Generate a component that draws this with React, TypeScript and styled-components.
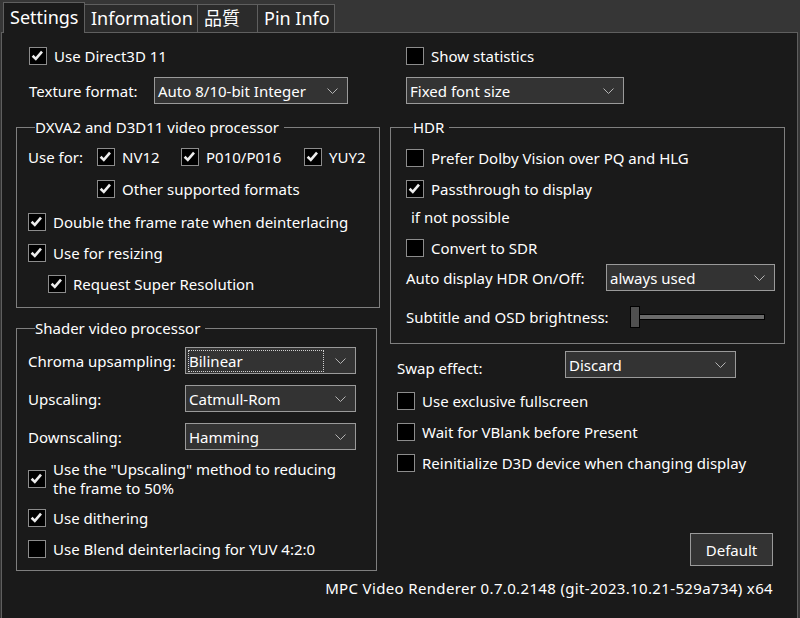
import React from 'react'
import styled, { createGlobalStyle } from 'styled-components'

const FONT = `'Noto Sans', 'Noto Sans CJK JP', sans-serif`

const GlobalStyle = createGlobalStyle`
  html, body {
    margin: 0;
    padding: 0;
    background: #1a1a1a;
  }
  body {
    font-family: ${FONT};
    color: #ffffff;
  }
`

const Window = styled.div`
  width: 800px;
  height: 618px;
  background: #363636;
  display: flex;
  flex-direction: column;
  overflow: hidden;
`

const TabBar = styled.div`
  height: 32px;
  display: flex;
  align-items: flex-end;
  padding-left: 3px;
  box-sizing: border-box;
`

const Tab = styled.div<{ $w: number; $active?: boolean }>`
  box-sizing: border-box;
  width: ${({ $w }) => $w}px;
  height: ${({ $active }) => ($active ? 31 : 28)}px;
  margin-right: -1px;
  margin-bottom: ${({ $active }) => ($active ? -1 : 0)}px;
  position: relative;
  z-index: ${({ $active }) => ($active ? 2 : 1)};
  padding-left: 6px;
  border: 1px solid #5f5f5f;
  border-bottom: none;
  background: ${({ $active }) => ($active ? '#1a1a1a' : '#2b2b2b')};
  font-size: 18px;
  line-height: ${({ $active }) => ($active ? 29 : 26)}px;
  white-space: nowrap;
`

const Panel = styled.div`
  flex: 1;
  margin-left: 1px;
  margin-right: 2px;
  border: 1px solid #5f5f5f;
  border-bottom: none;
  background: #1a1a1a;
  padding: 0 12px 0 14px;
  display: flex;
  flex-direction: column;
`

const Columns = styled.div`
  display: flex;
  gap: 10px;
`

const Column = styled.div<{ $w: number }>`
  width: ${({ $w }) => $w}px;
  display: flex;
  flex-direction: column;
  padding-top: 14px;
`

const Text = styled.span`
  font-size: 15px;
  line-height: 18px;
  white-space: nowrap;
  color: #ffffff;
`

const CheckRow = styled.label<{ $indent?: number; $top?: number }>`
  display: flex;
  align-items: center;
  gap: 7px;
  min-height: 18px;
  margin-left: ${({ $indent }) => $indent ?? 0}px;
  margin-top: ${({ $top }) => $top ?? 0}px;
`

const Box = styled.span`
  box-sizing: border-box;
  width: 18px;
  height: 18px;
  flex: none;
  border: 1px solid #8c8c8c;
  background: #000;
  display: flex;
  align-items: center;
  justify-content: center;
`

const TwoLine = styled(Text)`
  line-height: 19px;
  white-space: normal;
`

const Check = ({
  checked,
  label,
  indent,
  top,
  twoLine,
}: {
  checked?: boolean
  label: React.ReactNode
  indent?: number
  top?: number
  twoLine?: boolean
}) => (
  <CheckRow $indent={indent} $top={top}>
    <Box>
      {checked && (
        <svg width="16" height="16" viewBox="0 0 16 16">
          <path d="M2.6 7.8 L5.8 10.9 L12 3.6" fill="none" stroke="#ececec" strokeWidth="2.6" />
        </svg>
      )}
    </Box>
    {twoLine ? <TwoLine>{label}</TwoLine> : <Text>{label}</Text>}
  </CheckRow>
)

const FieldRow = styled.div<{ $indent?: number; $top?: number; $align?: string }>`
  display: flex;
  align-items: ${({ $align }) => $align ?? 'center'};
  margin-left: ${({ $indent }) => $indent ?? 0}px;
  margin-top: ${({ $top }) => $top ?? 0}px;
`

const FieldLabel = styled(Text)<{ $w?: number; $mt?: number }>`
  width: ${({ $w }) => ($w ? `${$w}px` : 'auto')};
  margin-top: ${({ $mt }) => $mt ?? 0}px;
  flex: none;
`

const SelectBox = styled.div<{ $w: number }>`
  box-sizing: border-box;
  width: ${({ $w }) => $w}px;
  height: 27px;
  flex: none;
  border: 1px solid #9a9a9a;
  background: #333333;
  display: flex;
  align-items: center;
  justify-content: space-between;
  padding: 0 9px 0 2px;
`

const SelectValue = styled(Text)<{ $focus?: boolean }>`
  box-sizing: border-box;
  padding-left: 1px;
  ${({ $focus }) =>
    $focus &&
    `
    width: 136px;
    height: 22px;
    line-height: 20px;
    border: 1px dotted #d0d0d0;
    padding-left: 0;
  `}
`

const Select = ({ w, value, focus }: { w: number; value: string; focus?: boolean }) => (
  <SelectBox $w={w}>
    <SelectValue $focus={focus}>{value}</SelectValue>
    <svg width="11" height="6" viewBox="0 0 11 6">
      <path d="M0.5 0.5 L5.5 5.5 L10.5 0.5" fill="none" stroke="#b4b4b4" strokeWidth="1" />
    </svg>
  </SelectBox>
)

const Group = styled.fieldset<{ $w: number; $top: number; $pad: string }>`
  box-sizing: border-box;
  width: ${({ $w }) => $w}px;
  margin: ${({ $top }) => $top}px 0 0 0;
  padding: ${({ $pad }) => $pad};
  border: 1px solid #7f7f7f;
  min-width: 0;
  display: flex;
  flex-direction: column;
`

const Legend = styled.legend`
  margin-left: 7px;
  padding: 0 5px 0 0;
  font-size: 15px;
  line-height: 20px;
  white-space: nowrap;
`

const UseForGrid = styled.div`
  display: grid;
  grid-template-columns: 69px 84px 123px auto;
  align-items: center;
`

const Slider = styled.div`
  display: flex;
  align-items: center;
  margin-left: 48px;
`

const Thumb = styled.div`
  box-sizing: border-box;
  width: 10px;
  height: 22px;
  background: #505050;
  border: 1px solid #000;
  position: relative;
  z-index: 1;
`

const Track = styled.div`
  box-sizing: border-box;
  width: 126px;
  height: 6px;
  margin-left: -1px;
  background: #6a6a6a;
  border: 1px solid #000;
`

const Button = styled.div`
  box-sizing: border-box;
  width: 83px;
  height: 33px;
  margin-top: auto;
  margin-right: 12px;
  margin-bottom: 5px;
  align-self: flex-end;
  background: #333333;
  border: 1px solid #9a9a9a;
  display: flex;
  align-items: center;
  justify-content: center;
  font-size: 15px;
`

const Footer = styled.div`
  margin-top: 7px;
  padding-right: 12px;
  text-align: right;
  font-size: 15px;
  line-height: 20px;
  letter-spacing: 0.35px;
  white-space: nowrap;
`

const App = () => (
  <Window>
    <GlobalStyle />
    <TabBar>
      <Tab $w={82} $active>Settings</Tab>
      <Tab $w={114}>Information</Tab>
      <Tab $w={61}>品質</Tab>
      <Tab $w={78}>Pin Info</Tab>
    </TabBar>
    <Panel>
      <Columns>
        <Column $w={364}>
          <Check checked label="Use Direct3D 11" indent={13} />
          <FieldRow $indent={13} $top={12}>
            <FieldLabel $w={125}>Texture format:</FieldLabel>
            <Select w={194} value="Auto 8/10-bit Integer" />
          </FieldRow>

          <Group $w={364} $top={13} $pad="11px 0 14px 11px">
            <Legend>DXVA2 and D3D11 video processor</Legend>
            <UseForGrid>
              <Text>Use for:</Text>
              <Check checked label="NV12" />
              <Check checked label="P010/P016" />
              <Check checked label="YUY2" />
            </UseForGrid>
            <Check checked label="Other supported formats" indent={69} top={14} />
            <Check checked label="Double the frame rate when deinterlacing" top={15} />
            <Check checked label="Use for resizing" top={13} />
            <Check checked label="Request Super Resolution" indent={20} top={13} />
          </Group>

          <Group $w={361} $top={10} $pad="9px 0 12px 11px">
            <Legend>Shader video processor</Legend>
            <FieldRow>
              <FieldLabel $w={157}>Chroma upsampling:</FieldLabel>
              <Select w={171} value="Bilinear" focus />
            </FieldRow>
            <FieldRow $top={11}>
              <FieldLabel $w={157}>Upscaling:</FieldLabel>
              <Select w={171} value="Catmull-Rom" />
            </FieldRow>
            <FieldRow $top={11}>
              <FieldLabel $w={157}>Downscaling:</FieldLabel>
              <Select w={171} value="Hamming" />
            </FieldRow>
            <Check
              checked
              twoLine
              top={10}
              label={
                <>
                  Use the "Upscaling" method to reducing
                  <br />
                  the frame to 50%
                </>
              }
            />
            <Check checked label="Use dithering" top={11} />
            <Check label="Use Blend deinterlacing for YUV 4:2:0" top={13} />
          </Group>
        </Column>

        <Column $w={395}>
          <Check label="Show statistics" indent={16} />
          <FieldRow $indent={16} $top={12}>
            <Select w={218} value="Fixed font size" />
          </FieldRow>

          <Group $w={395} $top={13} $pad="12px 0 15px 15px">
            <Legend>HDR</Legend>
            <Check label="Prefer Dolby Vision over PQ and HLG" />
            <Check checked label="Passthrough to display" top={13} />
            <FieldRow $indent={5} $top={10}>
              <Text>if not possible</Text>
            </FieldRow>
            <Check label="Convert to SDR" top={13} />
            <FieldRow $top={7}>
              <FieldLabel $w={200}>Auto display HDR On/Off:</FieldLabel>
              <Select w={169} value="always used" />
            </FieldRow>
            <FieldRow $top={15}>
              <FieldLabel $w={176}>Subtitle and OSD brightness:</FieldLabel>
              <Slider>
                <Thumb />
                <Track />
              </Slider>
            </FieldRow>
          </Group>

          <FieldRow $indent={7} $top={7} $align="flex-start">
            <FieldLabel $w={168} $mt={8}>
              Swap effect:
            </FieldLabel>
            <Select w={171} value="Discard" />
          </FieldRow>
          <Check label="Use exclusive fullscreen" indent={7} top={14} />
          <Check label="Wait for VBlank before Present" indent={7} top={13} />
          <Check label="Reinitialize D3D device when changing display" indent={7} top={13} />

          <Button>Default</Button>
        </Column>
      </Columns>
      <Footer>MPC Video Renderer 0.7.0.2148 (git-2023.10.21-529a734) x64</Footer>
    </Panel>
  </Window>
)

export default App
